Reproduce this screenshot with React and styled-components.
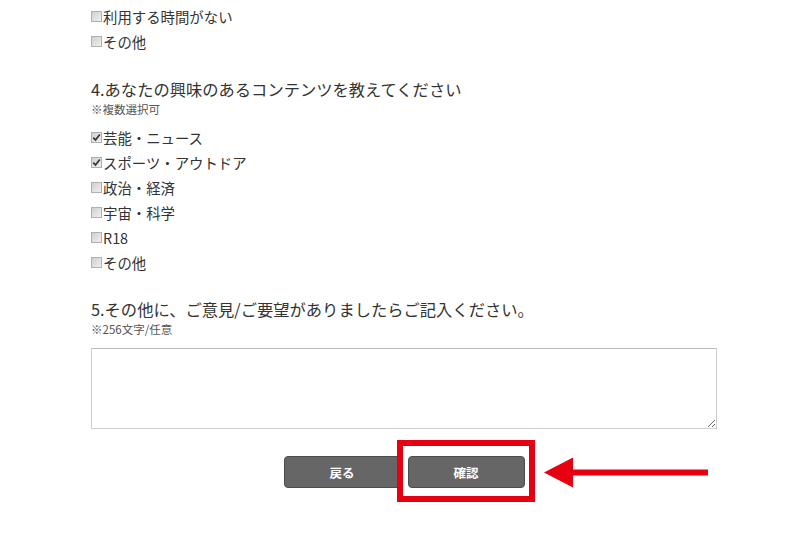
import React from 'react';
import styled, { createGlobalStyle } from 'styled-components';

const GlobalStyle = createGlobalStyle`
  html, body {
    margin: 0;
    padding: 0;
    background: #fff;
  }
  body {
    font-family: "Noto Sans CJK JP", "Noto Sans", sans-serif;
    color: #333;
  }
`;

const Page = styled.div`
  width: 800px;
  height: 534px;
  overflow: hidden;
  box-sizing: border-box;
  padding: 4px 0 0 91px;
`;

const Form = styled.form`
  width: 626px;
  display: flex;
  flex-direction: column;
`;

const Question = styled.h3`
  margin: ${(p) => p.$top || 26}px 0 0;
  font-size: 16.3px;
  font-weight: 400;
  line-height: 18px;
  color: #333;
  white-space: nowrap;
`;

const Note = styled.div`
  margin: 3px 0 ${(p) => p.$bottom || 0}px;
  font-size: 11.5px;
  line-height: 16px;
  color: #555;
`;

const Options = styled.div`
  display: flex;
  flex-direction: column;
`;

const Option = styled.label`
  height: 25px;
  display: flex;
  align-items: center;
  font-size: 14.4px;
  color: #333;
  white-space: nowrap;
`;

const Box = styled.span`
  width: 11px;
  height: 11px;
  box-sizing: border-box;
  border: 1px solid #b0b0b0;
  background: linear-gradient(135deg, #cfcfcf 0%, #e3e3e3 60%, #efefef 100%);
  display: inline-flex;
  align-items: center;
  justify-content: center;
  margin-right: 1px;
  flex-shrink: 0;
`;

const TextArea = styled.textarea`
  margin-top: 11px;
  width: 626px;
  height: 81px;
  box-sizing: border-box;
  border: 1px solid #cfcfcf;
  border-top-color: #bcbcbc;
  resize: vertical;
  font-family: inherit;
  outline: none;
`;

const Buttons = styled.div`
  margin-top: 27px;
  display: flex;
  justify-content: center;
  gap: 7px;
`;

const ButtonWrap = styled.div`
  position: relative;
`;

const Button = styled.button`
  width: 117px;
  height: 32px;
  border: 1px solid #4d4d4d;
  border-radius: 4px;
  background: #666;
  color: #fff;
  font-family: "Noto Sans CJK JP", sans-serif;
  font-size: 12.5px;
  font-weight: 700;
  cursor: pointer;
`;

const Highlight = styled.div`
  position: absolute;
  left: -11px;
  top: -16px;
  width: 138px;
  height: 62px;
  box-sizing: border-box;
  border: 6px solid #e60012;
  pointer-events: none;
`;

const Arrow = styled.svg`
  position: absolute;
  left: 136px;
  top: 1px;
  overflow: visible;
`;

function Check({ checked }) {
  return (
    <Box>
      {checked && (
        <svg width="9" height="9" viewBox="0 0 9 9">
          <path d="M1.3 4.6 L3.5 7 L7.8 1.5" fill="none" stroke="#333" strokeWidth="1.7" />
        </svg>
      )}
    </Box>
  );
}

const interests = [
  { label: '芸能・ニュース', checked: true },
  { label: 'スポーツ・アウトドア', checked: true },
  { label: '政治・経済' },
  { label: '宇宙・科学' },
  { label: 'R18' },
  { label: 'その他' },
];

export default function App() {
  return (
    <>
      <GlobalStyle />
      <Page>
        <Form onSubmit={(e) => e.preventDefault()}>
          <Options>
            <Option><Check />利用する時間がない</Option>
            <Option><Check />その他</Option>
          </Options>

          <Question>4.あなたの興味のあるコンテンツを教えてください</Question>
          <Note $bottom={8}>※複数選択可</Note>
          <Options>
            {interests.map((item) => (
              <Option key={item.label}>
                <Check checked={item.checked} />
                {item.label}
              </Option>
            ))}
          </Options>

          <Question $top={25}>5.その他に、ご意見/ご要望がありましたらご記入ください。</Question>
          <Note>※256文字/任意</Note>
          <TextArea />

          <Buttons>
            <Button type="button">戻る</Button>
            <ButtonWrap>
              <Button type="submit">確認</Button>
              <Highlight />
              <Arrow width="165" height="32" viewBox="0 0 165 32">
                <polygon points="0,15.5 29,0.5 29,30.5" fill="#e60012" />
                <rect x="28" y="12.5" width="136" height="6" fill="#e60012" />
              </Arrow>
            </ButtonWrap>
          </Buttons>
        </Form>
      </Page>
    </>
  );
}
